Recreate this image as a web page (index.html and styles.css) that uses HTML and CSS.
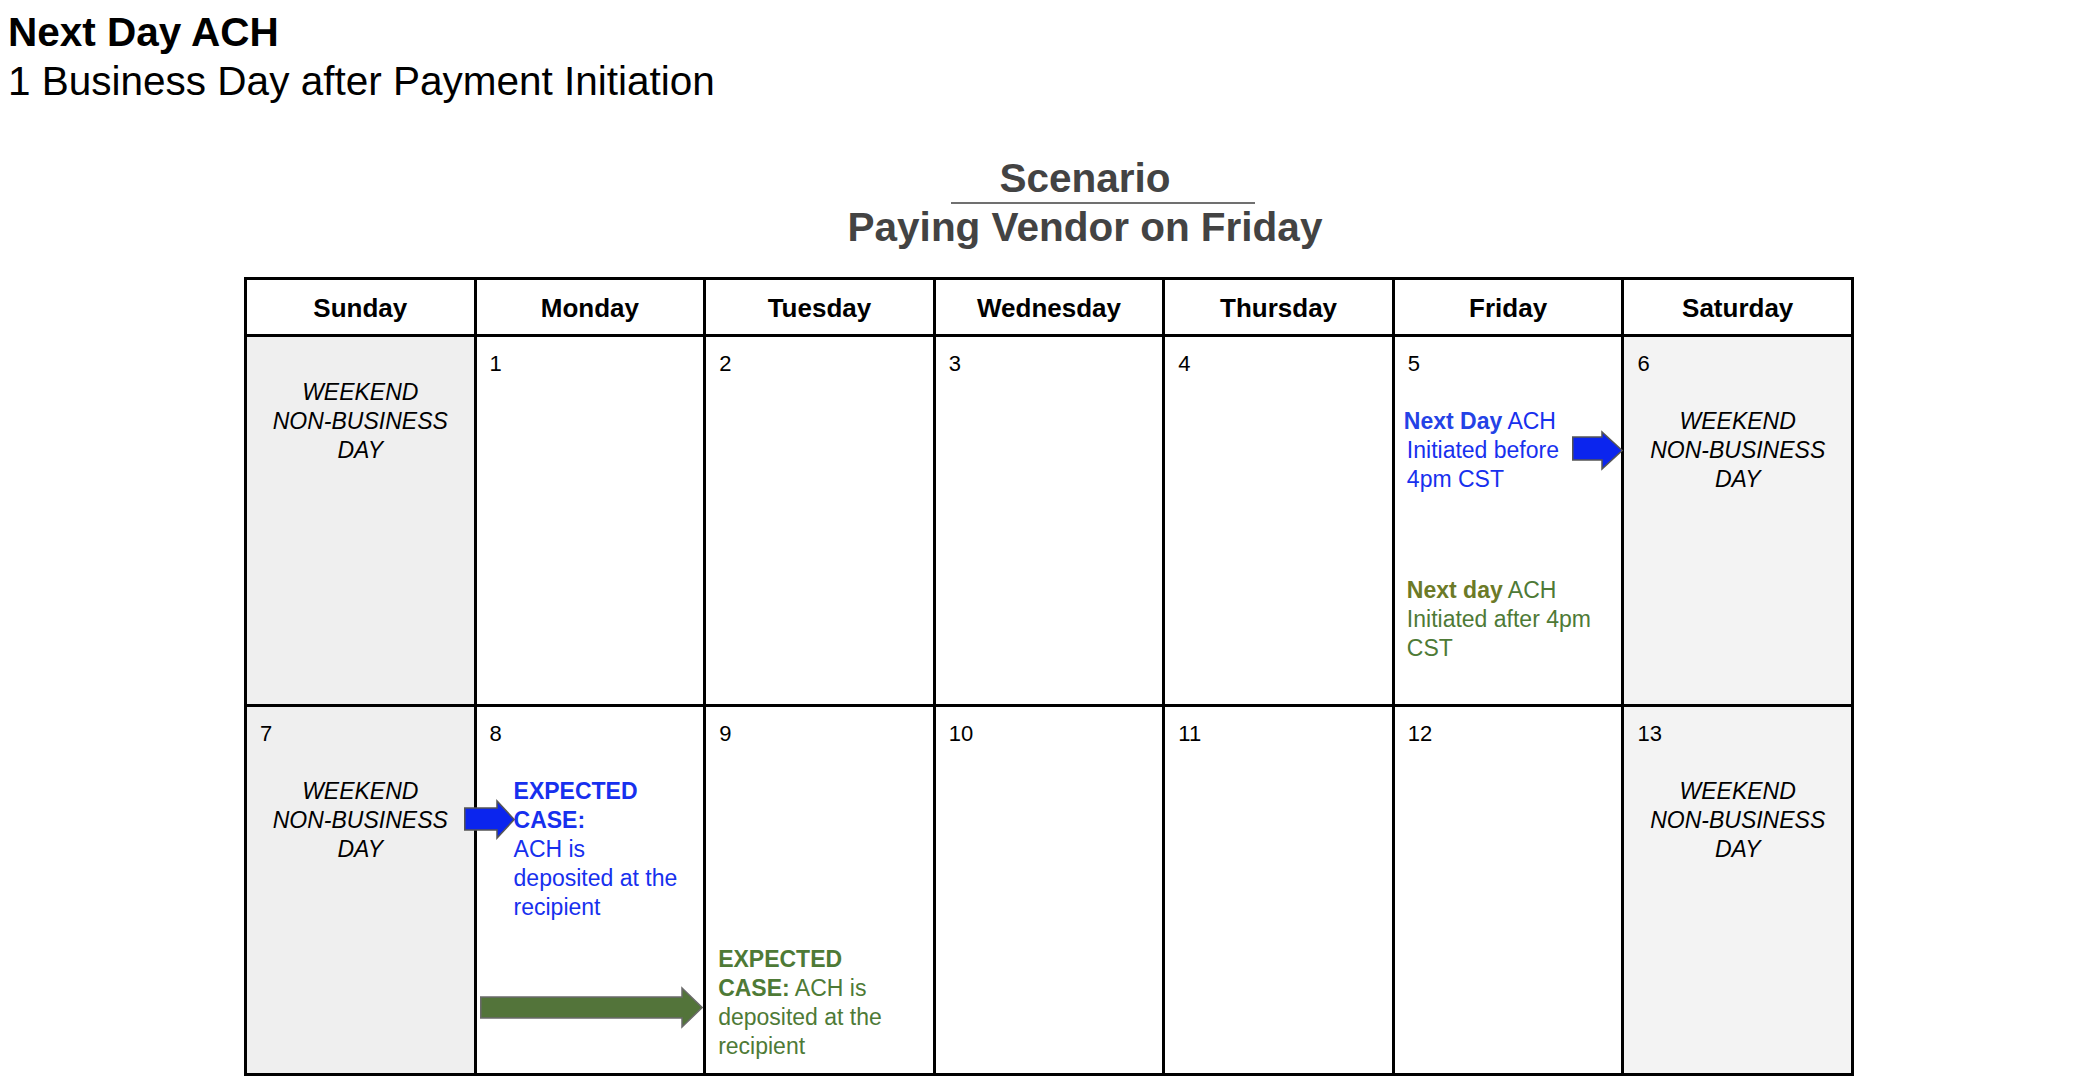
FILE: index.html
```html
<!DOCTYPE html>
<html lang="en">
<head>
<meta charset="utf-8">
<title>Next Day ACH</title>
<link rel="stylesheet" href="styles.css">
</head>
<body>
<h1 class="doc-title">Next Day ACH</h1>
<p class="doc-subtitle">1 Business Day after Payment Initiation</p>

<div class="scenario">
  <div class="scenario-label">Scenario</div>
  <div class="scenario-rule"></div>
  <div class="scenario-name">Paying Vendor on Friday</div>
</div>

<div class="calendar">
  <div class="cal-head">Sunday</div>
  <div class="cal-head">Monday</div>
  <div class="cal-head">Tuesday</div>
  <div class="cal-head">Wednesday</div>
  <div class="cal-head">Thursday</div>
  <div class="cal-head">Friday</div>
  <div class="cal-head">Saturday</div>

  <div class="cal-cell weekend sun">
    <div class="num">&nbsp;</div>
    <div class="weekend-note">WEEKEND<br>NON-BUSINESS<br>DAY</div>
  </div>
  <div class="cal-cell"><div class="num">1</div></div>
  <div class="cal-cell"><div class="num">2</div></div>
  <div class="cal-cell"><div class="num">3</div></div>
  <div class="cal-cell"><div class="num">4</div></div>
  <div class="cal-cell">
    <div class="num">5</div>
    <div class="note blue fri-before"><b class="strong">Next Day</b> ACH<br>Initiated before<br>4pm CST</div>
    <div class="note green fri-after"><b class="strong olive">Next day</b> ACH<br>Initiated after 4pm<br>CST</div>
  </div>
  <div class="cal-cell weekend sat">
    <div class="num">6</div>
    <div class="weekend-note gap">WEEKEND<br>NON-BUSINESS<br>DAY</div>
  </div>

  <div class="cal-cell weekend sun">
    <div class="num">7</div>
    <div class="weekend-note gap">WEEKEND<br>NON-BUSINESS<br>DAY</div>
  </div>
  <div class="cal-cell">
    <div class="num">8</div>
    <div class="note blue mon-expected"><b class="strong">EXPECTED<br>CASE:</b><br>ACH is<br>deposited at the<br>recipient</div>
  </div>
  <div class="cal-cell">
    <div class="num">9</div>
    <div class="note green tue-expected"><b class="strong">EXPECTED<br>CASE:</b> ACH is<br>deposited at the<br>recipient</div>
  </div>
  <div class="cal-cell"><div class="num">10</div></div>
  <div class="cal-cell"><div class="num">11</div></div>
  <div class="cal-cell"><div class="num">12</div></div>
  <div class="cal-cell weekend sat">
    <div class="num">13</div>
    <div class="weekend-note gap">WEEKEND<br>NON-BUSINESS<br>DAY</div>
  </div>

  <svg class="arrow arrow-fri" width="51" height="39" viewBox="0 0 51 39">
    <path d="M0.75 6 H30 V0.9 L50.2 19.5 L30 38.1 V29 H0.75 Z"/>
  </svg>
  <svg class="arrow arrow-sun" width="51" height="39" viewBox="0 0 51 39">
    <path d="M0.75 8 H33 V0.9 L50.2 19.5 L33 38.1 V30 H0.75 Z"/>
  </svg>
  <svg class="arrow arrow-mon" width="223" height="41" viewBox="0 0 223 41">
    <path d="M0.75 10 H202 V0.9 L222.2 20.5 L202 40.1 V31 H0.75 Z"/>
  </svg>
</div>
</body>
</html>
```

FILE: styles.css
```css
html, body {
  background: #ffffff;
}

body {
  margin: 8px;
  font-family: "Liberation Sans", Arial, sans-serif;
  color: #000000;
}

.doc-title {
  margin: 0;
  font-size: 40.5px;
  line-height: 48px;
  font-weight: bold;
}

.doc-subtitle {
  margin: 1px 0 0 0;
  font-size: 40.5px;
  line-height: 48px;
  font-weight: normal;
}

.scenario {
  width: 600px;
  margin: 50px 0 0 777px;
  text-align: center;
  color: #434343;
  font-size: 40.5px;
  font-weight: bold;
}

.scenario-label {
  line-height: 47px;
}

.scenario-rule {
  width: 304px;
  height: 2px;
  margin-left: 166px;
  background: #707070;
}

.scenario-name {
  line-height: 47px;
}

.calendar {
  position: relative;
  width: 1607px;
  margin: 26px 0 0 236px;
  display: grid;
  grid-template-columns: repeat(7, 1fr);
  grid-template-rows: 57px 370px 369px;
  border-left: 3px solid #000;
  border-top: 3px solid #000;
}

.cal-head,
.cal-cell {
  box-sizing: border-box;
  border-right: 3px solid #000;
  border-bottom: 3px solid #000;
}

.cal-head {
  display: flex;
  align-items: center;
  justify-content: center;
  font-size: 26px;
  font-weight: bold;
  line-height: 30px;
  padding-top: 2px;
}

.cal-cell {
  padding: 12px 12px 0 12px;
  font-size: 23px;
  line-height: 29px;
  background: #ffffff;
}

.cal-cell.sun {
  background: #efefef;
}

.cal-cell.sat {
  background: #f3f3f3;
}

.num {
  font-size: 22px;
  line-height: 29px;
  padding-left: 1px;
}

.weekend-note {
  text-align: center;
  font-style: italic;
}

.weekend-note.gap {
  margin-top: 29px;
}

.note.blue {
  color: #1730ee;
}

.note.green {
  color: #4e7a36;
}

.strong {
  font-weight: bold;
}

.strong.olive {
  color: #6c7a27;
}

.fri-before {
  margin-top: 29px;
}

.fri-before .strong {
  color: #2442e6;
  margin-left: -3px;
}

.fri-after {
  margin-top: 82px;
}

.mon-expected {
  margin-top: 29px;
  margin-left: 25px;
}

.tue-expected {
  margin-top: 197px;
}

.arrow {
  position: absolute;
  overflow: visible;
}

.arrow path {
  stroke-width: 1.5px;
  stroke-linejoin: miter;
}

.arrow-fri {
  left: 1325px;
  top: 151px;
}

.arrow-fri path,
.arrow-sun path {
  fill: #0b25ee;
  stroke: #555555;
}

.arrow-sun {
  left: 217px;
  top: 520px;
}

.arrow-mon {
  left: 233px;
  top: 707px;
}

.arrow-mon path {
  fill: #53743a;
  stroke: #6a6a6a;
}
```
